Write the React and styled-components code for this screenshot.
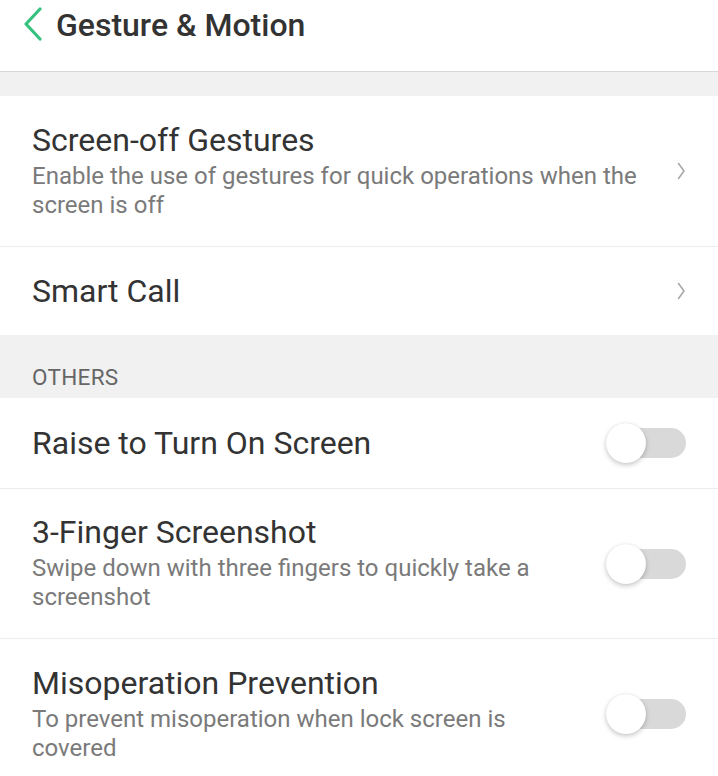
import React from "react";
import styled, { createGlobalStyle } from "styled-components";

const GlobalStyle = createGlobalStyle`
  html, body {
    margin: 0;
    padding: 0;
    background: #ffffff;
  }
  body {
    font-family: Roboto, "Noto Sans", sans-serif;
  }
`;

const Page = styled.div`
  width: 718px;
  height: 776px;
  overflow: hidden;
  background: #f1f1f1;
`;

const Header = styled.header`
  height: 72px;
  display: flex;
  align-items: flex-start;
  padding: 7px 0 0 22px;
  box-sizing: border-box;
  background: #ffffff;
  border-bottom: 1px solid #d8d8d8;
`;

const BackButton = styled.div`
  width: 22px;
  height: 34px;
  display: flex;
  align-items: center;
  margin-right: 12px;
`;

const Title = styled.h1`
  margin: 0;
  font-size: 32px;
  font-weight: 500;
  color: #333333;
  line-height: 36px;
`;

const Spacer = styled.div`
  height: 24px;
`;

const Group = styled.section`
  background: #ffffff;
`;

const Row = styled.div`
  display: flex;
  align-items: center;
  min-height: ${(p) => p.$height}px;
  padding-left: 32px;
  box-sizing: border-box;
  border-bottom: ${(p) => (p.$divider ? "1px solid #ececec" : "none")};
`;

const RowText = styled.div`
  flex: 1;
  display: flex;
  flex-direction: column;
  padding-right: 36px;
`;

const RowTitle = styled.div`
  font-size: 32px;
  color: #333333;
  line-height: 34px;
`;

const RowSub = styled.div`
  font-size: 24px;
  color: #7a7a7a;
  line-height: 29px;
  margin-top: 5px;
`;

const Chevron = styled.div`
  width: 12px;
  margin-right: 30px;
  display: flex;
  align-items: center;
`;

const SectionHeader = styled.div`
  height: 63px;
  display: flex;
  align-items: flex-end;
  padding: 0 0 8px 32px;
  box-sizing: border-box;
  font-size: 22.5px;
  color: #666666;
  letter-spacing: 0.3px;
`;

const Toggle = styled.div`
  position: relative;
  width: 80px;
  height: 40px;
  margin-right: 32px;
  flex-shrink: 0;
`;

const Track = styled.div`
  position: absolute;
  left: 14px;
  right: 0;
  top: 5px;
  height: 30px;
  border-radius: 15px;
  background: #d9d9d9;
`;

const Knob = styled.div`
  position: absolute;
  left: 0;
  top: 0;
  width: 40px;
  height: 40px;
  border-radius: 50%;
  background: #ffffff;
  box-shadow: 0 2px 5px rgba(0, 0, 0, 0.22), 0 0 1px rgba(0, 0, 0, 0.12);
`;

function Arrow() {
  return (
    <Chevron>
      <svg width="10" height="20" viewBox="0 0 10 20">
        <path d="M2.5 2.5 L8 10 L2.5 17.5" fill="none" stroke="#a8a8a8" strokeWidth="1.6" strokeLinecap="round" strokeLinejoin="round" />
      </svg>
    </Chevron>
  );
}

function Switch() {
  return (
    <Toggle>
      <Track />
      <Knob />
    </Toggle>
  );
}

function Item({ title, sub, height, divider, action }) {
  return (
    <Row $height={height} $divider={divider}>
      <RowText>
        <RowTitle>{title}</RowTitle>
        {sub && <RowSub>{sub}</RowSub>}
      </RowText>
      {action === "arrow" ? <Arrow /> : <Switch />}
    </Row>
  );
}

export default function App() {
  return (
    <>
      <GlobalStyle />
      <Page>
        <Header>
          <BackButton>
            <svg width="22" height="34" viewBox="0 0 22 34">
              <path d="M18 2 L4 17 L18 32" fill="none" stroke="#35c27f" strokeWidth="3.2" strokeLinecap="round" strokeLinejoin="round" />
            </svg>
          </BackButton>
          <Title>Gesture &amp; Motion</Title>
        </Header>
        <Spacer />
        <Group>
          <Item
            title="Screen-off Gestures"
            sub="Enable the use of gestures for quick operations when the screen is off"
            height={151}
            divider
            action="arrow"
          />
          <Item title="Smart Call" height={88} action="arrow" />
        </Group>
        <SectionHeader>OTHERS</SectionHeader>
        <Group>
          <Item title="Raise to Turn On Screen" height={91} divider action="switch" />
          <Item
            title="3-Finger Screenshot"
            sub="Swipe down with three fingers to quickly take a screenshot"
            height={150}
            divider
            action="switch"
          />
          <Item
            title="Misoperation Prevention"
            sub="To prevent misoperation when lock screen is covered"
            height={150}
            action="switch"
          />
        </Group>
      </Page>
    </>
  );
}
